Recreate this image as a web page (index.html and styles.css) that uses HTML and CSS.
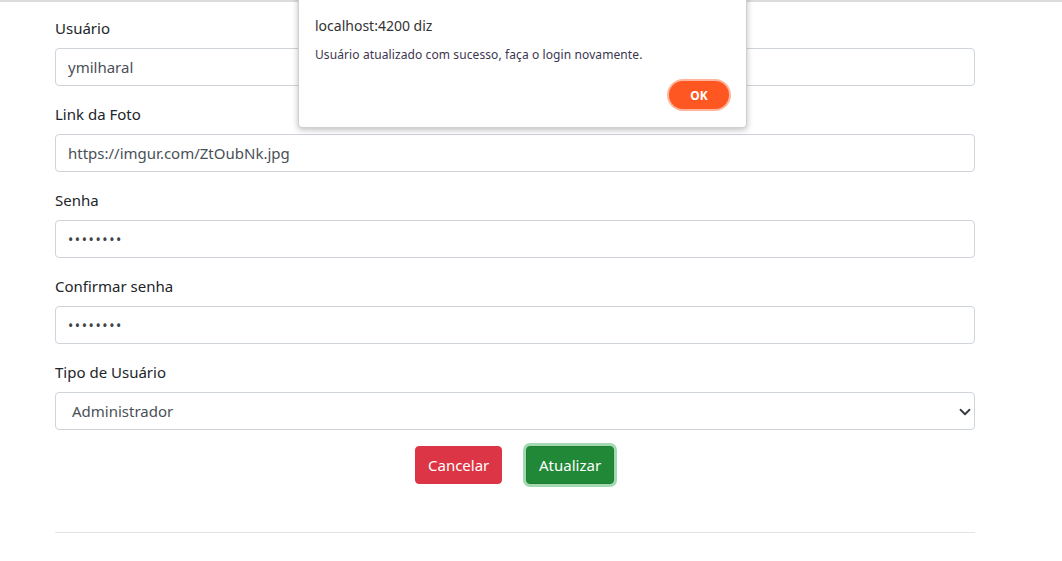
FILE: index.html
```html
<!DOCTYPE html>
<html lang="pt-BR">
<head>
<meta charset="utf-8">
<title>Editar usuário</title>
<link rel="stylesheet" href="styles.css">
</head>
<body>
<div class="topbar"></div>
<main class="page">
  <form class="form">
    <div class="group">
      <label class="label">Usuário</label>
      <input class="control" type="text" value="ymilharal">
    </div>
    <div class="group">
      <label class="label">Link da Foto</label>
      <input class="control" type="text" value="https://imgur.com/ZtOubNk.jpg">
    </div>
    <div class="group">
      <label class="label">Senha</label>
      <input class="control" type="password" value="12345678">
    </div>
    <div class="group">
      <label class="label">Confirmar senha</label>
      <input class="control" type="password" value="12345678">
    </div>
    <div class="group">
      <label class="label">Tipo de Usuário</label>
      <div class="select-wrap">
        <select class="control select">
          <option>Administrador</option>
          <option>Normal</option>
        </select>
        <svg class="chev" width="12" height="12" viewBox="0 0 16 16"><path d="M2 5l6 6 6-6" fill="none" stroke="#343a40" stroke-width="2.4" stroke-linecap="round" stroke-linejoin="round"/></svg>
      </div>
    </div>
    <div class="actions">
      <button type="button" class="btn btn-danger">Cancelar</button>
      <button type="button" class="btn btn-success focused">Atualizar</button>
    </div>
  </form>
  <hr class="rule">
</main>

<div class="dialog">
  <div class="dialog-title">localhost:4200 diz</div>
  <div class="dialog-msg">Usuário atualizado com sucesso, faça o login novamente.</div>
  <div class="dialog-actions">
    <button type="button" class="ok">OK</button>
  </div>
</div>
</body>
</html>
```

FILE: styles.css
```css
* { box-sizing: border-box; }

html, body {
  margin: 0;
  padding: 0;
  background: #fff;
}

body {
  font-family: "Noto Sans", "Open Sans", sans-serif;
  color: #212529;
  font-size: 15px;
  overflow: hidden;
}

.topbar {
  height: 2px;
  background: #dcdcdc;
}

.page {
  width: 920px;
  margin-left: 55px;
  padding-top: 14px;
}

.form {
  display: flex;
  flex-direction: column;
}

.group {
  display: flex;
  flex-direction: column;
  margin-bottom: 16px;
}

.label {
  display: block;
  line-height: 24px;
  height: 24px;
  margin-bottom: 8px;
  color: #212529;
}

.control {
  display: block;
  width: 100%;
  height: 38px;
  padding: 6px 12px;
  font-family: inherit;
  font-size: 15px;
  color: #495057;
  background: #fff;
  border: 1px solid #ced4da;
  border-radius: 4px;
  outline: none;
}

input[type="password"].control {
  letter-spacing: 1.6px;
  font-size: 14px;
  color: #3d4349;
}

.select-wrap {
  position: relative;
}

.select {
  appearance: none;
  -webkit-appearance: none;
  padding-left: 16px;
}

.chev {
  position: absolute;
  right: 4px;
  top: 14px;
  pointer-events: none;
}

.actions {
  display: flex;
  justify-content: center;
  gap: 24px;
  margin-right: 1px;
}

.btn {
  height: 38px;
  padding: 0 12px;
  font-family: inherit;
  font-size: 15px;
  color: #fff;
  border: 1px solid transparent;
  border-radius: 4px;
  cursor: pointer;
}

.btn-danger {
  background: #dc3545;
  border-color: #dc3545;
  width: 87px;
}

.btn-success {
  background: #218838;
  border-color: #1e7e34;
  width: 88px;
}

.focused {
  box-shadow: 0 0 0 3px rgba(72, 180, 97, 0.5);
}

.rule {
  margin: 48px 0 0;
  border: 0;
  border-top: 1px solid #e3e3e3;
}

.dialog {
  position: absolute;
  left: 298px;
  top: -10px;
  width: 449px;
  height: 138px;
  background: #fff;
  border: 1px solid #cfcfcf;
  border-radius: 0 0 4px 4px;
  box-shadow: 0 2px 6px rgba(0, 0, 0, 0.25);
  padding: 25px 16px 0 16px;
  display: flex;
  flex-direction: column;
}

.dialog-title {
  font-size: 14px;
  line-height: 20px;
  color: #333;
}

.dialog-msg {
  font-size: 12px;
  line-height: 18px;
  margin-top: 10px;
  color: #3c3650;
  letter-spacing: 0.1px;
}

.dialog-actions {
  display: flex;
  justify-content: flex-end;
  margin-top: 17px;
  padding-right: 1px;
}

.ok {
  width: 60px;
  height: 28px;
  border: 0;
  border-radius: 14px;
  background: #ff5722;
  color: #fff;
  font-family: inherit;
  font-weight: 700;
  font-size: 12px;
  box-shadow: 0 0 0 2px #ffb59c;
}
```
